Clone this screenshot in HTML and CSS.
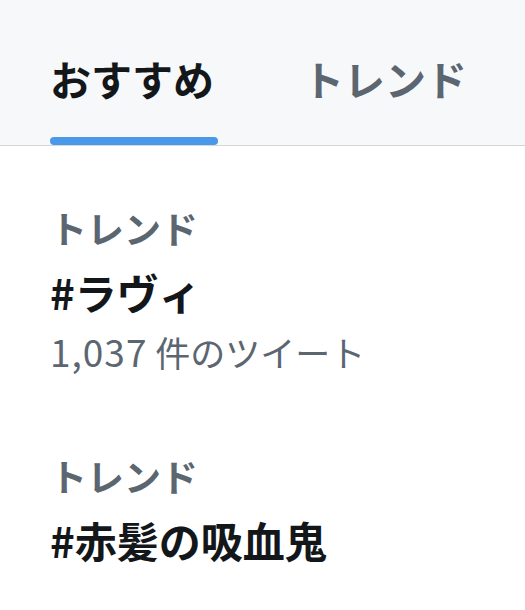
FILE: index.html
```html
<!DOCTYPE html>
<html lang="ja">
<head>
<meta charset="utf-8">
<link rel="stylesheet" href="styles.css">
</head>
<body>
<div class="tabs">
  <div class="tab active"><span class="tab-label">おすすめ</span><span class="indicator"></span></div>
  <div class="tab"><span class="tab-label">トレンド</span></div>
</div>
<div class="list">
  <div class="trend">
    <div class="label">トレンド</div>
    <div class="title">#ラヴィ</div>
    <div class="count"><span class="num">1,037</span> 件のツイート</div>
  </div>
  <div class="trend">
    <div class="label">トレンド</div>
    <div class="title">#赤髪の吸血鬼</div>
  </div>
</div>
</body>
</html>
```
FILE: styles.css
```css
html, body {
  margin: 0;
  padding: 0;
  background: #ffffff;
}
body {
  font-family: "Noto Sans CJK JP", "Noto Sans", sans-serif;
  width: 525px;
  height: 610px;
  overflow: hidden;
}
.tabs {
  display: flex;
  height: 145px;
  background: #f7f8f9;
  border-bottom: 1px solid #d3d6da;
  padding-left: 50px;
  gap: 85px;
}
.tab {
  display: flex;
  flex-direction: column;
  justify-content: flex-end;
  align-items: stretch;
}
.tab-label {
  font-size: 41px;
  font-weight: 700;
  line-height: 1;
  color: #5b6671;
  margin-bottom: 46px;
}
.tab.active .tab-label {
  color: #14171a;
  margin-bottom: 38px;
}
.indicator {
  display: block;
  height: 8px;
  width: 168px;
  background: #4a99e9;
  border-radius: 4px;
}
.list {
  padding: 0 50px;
}
.trend {
  display: flex;
  flex-direction: column;
}
.trend:first-child {
  padding-top: 64px;
}
.trend + .trend {
  padding-top: 88px;
}
.label {
  font-size: 37px;
  font-weight: 700;
  line-height: 1;
  color: #5b6671;
}
.title {
  font-size: 42px;
  font-weight: 700;
  line-height: 1;
  color: #14171a;
  margin-top: 24px;
}
.count {
  font-size: 35px;
  font-weight: 400;
  line-height: 1;
  color: #5b6671;
  margin-top: 20px;
}
.num {
  font-size: 37px;
  letter-spacing: 1px;
}
```
